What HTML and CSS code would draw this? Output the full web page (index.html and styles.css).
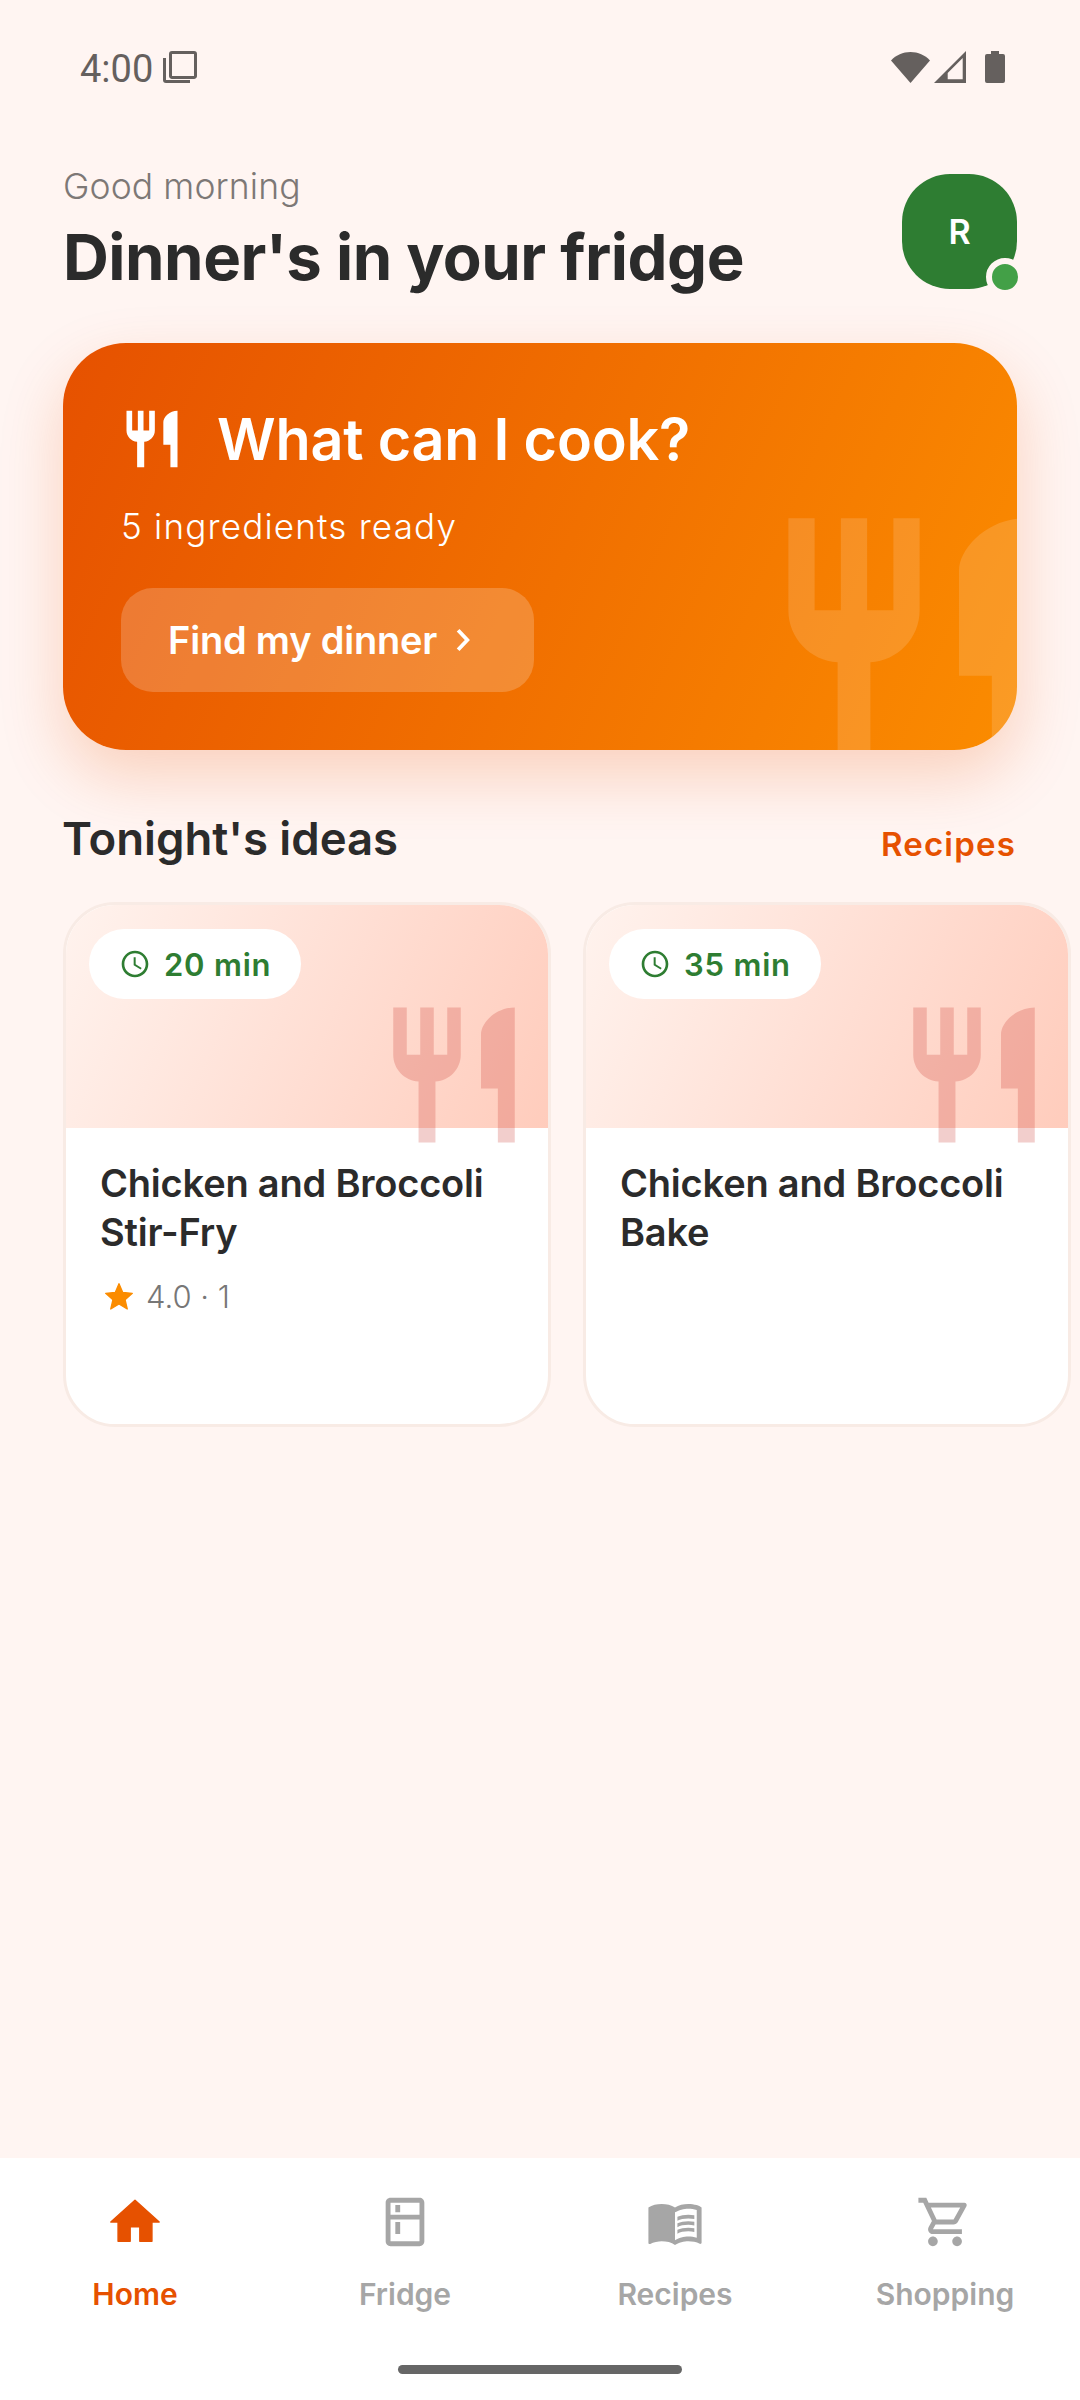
FILE: index.html
```html
<!DOCTYPE html>
<html lang="en">

<head>
    <meta charset="utf-8">
    <meta name="viewport" content="width=device-width, initial-scale=1.0">
    <title>Dinner's in your fridge</title>
    <link rel="stylesheet" href="styles.css">
</head>

<body>
    <svg class="icon-defs" width="0" height="0" aria-hidden="true">
        <symbol id="restaurant" viewBox="0 0 24 24">
            <path d="M11 9H9V2H7v7H5V2H3v7c0 2.12 1.66 3.84 3.75 3.97V22h2.5v-9.03C11.34 12.84 13 11.12 13 9V2h-2v7zm5-3v8h2.5v8H21V2c-2.76 0-5 2.24-5 4z" />
        </symbol>
        <symbol id="schedule" viewBox="0 0 24 24">
            <path d="M11.99 2C6.47 2 2 6.48 2 12s4.47 10 9.99 10C17.52 22 22 17.52 22 12S17.52 2 11.99 2zM12 20c-4.42 0-8-3.58-8-8s3.58-8 8-8 8 3.58 8 8-3.58 8-8 8zm.5-13H11v6l5.25 3.15.75-1.23-4.5-2.67z" />
        </symbol>
    </svg>

    <div class="status-bar">
        <div class="status-left">
            <span class="status-time">4:00</span>
            <svg class="status-copy" viewBox="0 0 34 32">
                <path d="M9 1.5h22a1.5 1.5 0 0 1 1.500 1.500v22a1.500 1.500 0 0 1-1.500 1.500H9A1.500 1.500 0 0 1 7.500 25V3A1.500 1.500 0 0 1 9 1.500z" />
                <path d="M1.500 7v22a1.500 1.500 0 0 0 1.500 1.500h24" />
            </svg>
        </div>
        <div class="status-right">
            <svg class="status-wifi" viewBox="0 0 39 31">
                <path d="M0 8.500C5 3 12 0 19.500 0S34 3 39 8.500L19.500 31z" />
            </svg>
            <svg class="status-signal" viewBox="0 0 32 32">
                <path fill-rule="evenodd" d="M32 0v32H0zM28.700 7 13.700 22v6.300h15z" />
            </svg>
            <svg class="status-battery" viewBox="0 0 20 32">
                <path d="M6 0h8v3h4a2 2 0 0 1 2 2v25a2 2 0 0 1-2 2H2a2 2 0 0 1-2-2V5a2 2 0 0 1 2-2h4z" />
            </svg>
        </div>
    </div>

    <header class="header">
        <div>
            <p class="greeting">Good morning</p>
            <h1 class="page-title">Dinner's in your fridge</h1>
        </div>
        <div class="avatar">
            R
            <span class="avatar-dot"></span>
        </div>
    </header>

    <section class="hero">
        <div class="hero-clip">
            <svg class="hero-mark"><use href="#restaurant" /></svg>
        </div>
        <div class="hero-title-row">
            <svg class="hero-icon"><use href="#restaurant" /></svg>
            <h2 class="hero-title">What can I cook?</h2>
        </div>
        <p class="hero-sub">5 ingredients ready</p>
        <div class="hero-btn">
            Find my dinner
            <svg class="hero-chevron" viewBox="0 0 14 24">
                <path d="M2.500 3 11 12l-8.500 9" />
            </svg>
        </div>
    </section>

    <div class="section-head">
        <h2 class="section-title">Tonight's ideas</h2>
        <span class="section-link">Recipes</span>
    </div>

    <div class="cards">
        <article class="card">
            <div class="card-top">
                <div class="chip">
                    <svg class="chip-icon"><use href="#schedule" /></svg>
                    20 min
                </div>
            </div>
            <svg class="card-mark"><use href="#restaurant" /></svg>
            <div class="card-body">
                <h3 class="card-title">Chicken and Broccoli Stir-Fry</h3>
                <div class="rating">
                    <svg class="star" viewBox="0 0 24 24">
                        <path d="M12 17.270 18.180 21l-1.640-7.030L22 9.240l-7.190-.610L12 2 9.190 8.630 2 9.240l5.460 4.730L5.820 21z" />
                    </svg>
                    4.0 · 1
                </div>
            </div>
        </article>
        <article class="card">
            <div class="card-top">
                <div class="chip">
                    <svg class="chip-icon"><use href="#schedule" /></svg>
                    35 min
                </div>
            </div>
            <svg class="card-mark"><use href="#restaurant" /></svg>
            <div class="card-body">
                <h3 class="card-title">Chicken and Broccoli Bake</h3>
            </div>
        </article>
    </div>

    <nav class="bottom-nav">
        <div class="nav-items">
            <div class="nav-item active">
                <svg viewBox="0 0 24 24">
                    <path stroke="currentColor" stroke-width="0.6" stroke-linejoin="round" d="M10 20v-6h4v6h5v-8h3L12 3 2 12h3v8z" />
                </svg>
                <span>Home</span>
            </div>
            <div class="nav-item">
                <svg viewBox="0 0 24 24">
                    <path d="M18 2.010 6 2c-1.100 0-2 .89-2 2v16c0 1.100.9 2 2 2h12c1.100 0 2-.9 2-2V4c0-1.110-.9-1.990-2-1.990zM18 20H6v-9.020h12V20zm0-11H6V4h12v5zM8 5h2v3H8zm0 7h2v5H8z" />
                </svg>
                <span>Fridge</span>
            </div>
            <div class="nav-item">
                <svg viewBox="0 0 24 24">
                    <path d="M21 5c-1.110-.35-2.330-.5-3.500-.5-1.950 0-4.050.4-5.500 1.500-1.450-1.100-3.550-1.500-5.500-1.500S2.450 4.900 1 6v14.650c0 .25.25.5.5.5.1 0 .15-.05.25-.05C3.100 20.450 5.050 20 6.500 20c1.950 0 4.050.4 5.500 1.500 1.350-.85 3.800-1.500 5.500-1.500 1.650 0 3.350.3 4.750 1.050.1.05.15.05.25.05.25 0 .5-.25.5-.5V6c-.6-.45-1.250-.75-2-1zm0 13.500c-1.100-.35-2.300-.5-3.500-.5-1.700 0-4.150.65-5.500 1.500V8c1.350-.85 3.800-1.500 5.500-1.500 1.200 0 2.400.15 3.500.5v11.500z" />
                    <path d="M17.500 10.500c.88 0 1.730.09 2.500.26V9.240c-.79-.15-1.640-.24-2.500-.24-1.700 0-3.240.29-4.500.83v1.660c1.130-.64 2.700-.99 4.500-.99zM13 12.490v1.660c1.130-.64 2.700-.99 4.500-.99.88 0 1.730.09 2.500.26V11.900c-.79-.15-1.640-.24-2.500-.24-1.700 0-3.240.3-4.500.83zM17.500 14.330c-1.700 0-3.240.29-4.500.83v1.660c1.130-.64 2.700-.99 4.500-.99.88 0 1.730.09 2.500.26v-1.520c-.79-.16-1.640-.24-2.500-.24z" />
                </svg>
                <span>Recipes</span>
            </div>
            <div class="nav-item">
                <svg viewBox="0 0 24 24">
                    <path d="M15.550 13c.75 0 1.410-.41 1.750-1.030l3.580-6.490c.37-.66-.11-1.480-.87-1.480H5.210l-.94-2H1v2h2l3.600 7.590-1.350 2.440C4.520 15.370 5.480 17 7 17h12v-2H7l1.100-2h7.450zM6.160 6h12.150l-2.760 5H8.530L6.160 6zM7 18c-1.100 0-1.990.9-1.990 2S5.900 22 7 22s2-.9 2-2-.9-2-2-2zm10 0c-1.100 0-1.990.9-1.990 2s.89 2 1.990 2 2-.9 2-2-.9-2-2-2z" />
                </svg>
                <span>Shopping</span>
            </div>
        </div>
        <div class="home-bar"></div>
    </nav>
</body>

</html>
```

FILE: styles.css
```css
:root {
    --bg: #FFF5F2;
    --ink: #2B2B2B;
    --orange: #E65100;
    --orange-light: #FB8C00;
    --green: #2E7D32;
    --grey: #A6A6A6;
    --status: #65605E;
    --sans: "Inter", "Liberation Sans", sans-serif;
}

*,
::before,
::after {
    box-sizing: border-box;
    padding: 0;
    margin: 0;
}

body {
    width: 1080px;
    height: 2400px;
    overflow: hidden;
    display: flex;
    flex-direction: column;
    background: var(--bg);
    color: var(--ink);
    font-family: var(--sans);
}

.icon-defs {
    position: absolute;
}

/* status bar */
.status-bar {
    height: 134px;
    flex: none;
    display: flex;
    justify-content: space-between;
    align-items: center;
    padding: 0 75px 0 80px;
    color: var(--status);
}

.status-left,
.status-right {
    display: flex;
    align-items: center;
}

.status-time {
    padding-top: 3px;
    font-family: "Roboto", sans-serif;
    font-size: 38px;
    line-height: 44px;
}

.status-copy {
    width: 34px;
    height: 32px;
    margin-left: 10px;
    fill: none;
    stroke: var(--status);
    stroke-width: 3;
}

.status-wifi {
    width: 39px;
    height: 31px;
    fill: var(--status);
}

.status-signal {
    width: 32px;
    height: 32px;
    margin-left: 4px;
    fill: var(--status);
}

.status-battery {
    width: 20px;
    height: 32px;
    margin-left: 19px;
    fill: var(--status);
}

/* header */
.header {
    height: 130px;
    flex: none;
    margin-top: 33px;
    padding: 0 63px;
    display: flex;
    justify-content: space-between;
}

.greeting {
    font-size: 35.5px;
    line-height: 40px;
    font-weight: 300;
    letter-spacing: 0.1px;
    color: #7D7876;
}

.page-title {
    margin-top: 10px;
    font-size: 63.5px;
    line-height: 80px;
    font-weight: 700;
    letter-spacing: -0.5px;
}

.avatar {
    position: relative;
    width: 115px;
    height: 115px;
    margin-top: 7px;
    border-radius: 48px;
    background: var(--green);
    color: #fff;
    font-size: 34px;
    font-weight: 600;
    display: flex;
    align-items: center;
    justify-content: center;
}

.avatar-dot {
    position: absolute;
    right: -7px;
    bottom: -7px;
    width: 38px;
    height: 38px;
    border-radius: 50%;
    border: 6px solid var(--bg);
    background: #43A047;
}

/* hero card */
.hero {
    position: relative;
    height: 407px;
    flex: none;
    margin: 46px 63px 0;
    padding: 63px 58px 0;
    border-radius: 63px;
    background: linear-gradient(113deg, var(--orange), var(--orange-light));
    box-shadow: 0 26px 63px rgba(230, 81, 0, 0.22);
    color: #fff;
}

.hero-clip {
    position: absolute;
    inset: 0;
    overflow: hidden;
    border-radius: 63px;
}

.hero-mark {
    position: absolute;
    left: 686px;
    top: 149px;
    width: 315px;
    height: 315px;
    fill: rgba(255, 255, 255, 0.14);
}

.hero-title-row {
    position: relative;
    display: flex;
    align-items: center;
    height: 66px;
}

.hero-icon {
    width: 68px;
    height: 68px;
    margin-left: -3px;
    fill: #fff;
}

.hero-title {
    margin-left: 31px;
    font-size: 57.5px;
    line-height: 66px;
    font-weight: 600;
    letter-spacing: -0.2px;
}

.hero-sub {
    position: relative;
    margin-top: 32px;
    font-size: 35px;
    line-height: 44px;
    font-weight: 300;
    letter-spacing: 1.2px;
}

.hero-btn {
    position: relative;
    width: 413px;
    height: 104px;
    margin-top: 40px;
    padding-left: 47px;
    border-radius: 32px;
    background: rgba(255, 255, 255, 0.2);
    display: flex;
    align-items: center;
    font-size: 38px;
    font-weight: 600;
    letter-spacing: -0.2px;
}

.hero-chevron {
    width: 16px;
    height: 26px;
    margin-left: 18px;
    fill: none;
    stroke: #fff;
    stroke-width: 3.500;
}

/* section head */
.section-head {
    flex: none;
    margin-top: 61px;
    padding: 0 64px 0 62px;
    height: 56px;
    display: flex;
    justify-content: space-between;
    align-items: baseline;
}

.section-title {
    font-size: 45.5px;
    line-height: 56px;
    font-weight: 600;
}

.section-link {
    position: relative;
    top: 1px;
    font-size: 33px;
    font-weight: 600;
    letter-spacing: 1.2px;
    color: var(--orange);
}

/* recipe cards */
.cards {
    flex: none;
    margin-top: 35px;
    padding-left: 63px;
    display: flex;
    gap: 32px;
}

.card {
    position: relative;
    flex: none;
    width: 488px;
    height: 525px;
    border: 3px solid #F8EBE5;
    border-radius: 52px;
    background: #fff;
    overflow: hidden;
}

.card-top {
    height: 223px;
    padding: 24px 0 0 23px;
    background: linear-gradient(115deg, #FFF3EE, #FFCCBC);
}

.chip {
    width: 212px;
    height: 70px;
    padding-left: 30px;
    border-radius: 35px;
    background: #fff;
    color: var(--green);
    font-size: 31px;
    font-weight: 600;
    letter-spacing: 0.8px;
    display: flex;
    align-items: center;
}

.chip-icon {
    width: 32px;
    height: 32px;
    margin-right: 13px;
    fill: var(--green);
}

.card-mark {
    position: absolute;
    left: 307px;
    top: 89px;
    width: 162px;
    height: 162px;
    fill: rgba(205, 60, 50, 0.25);
}

.card-body {
    padding: 31px 34px 0;
}

.card-title {
    font-size: 38px;
    line-height: 49px;
    font-weight: 600;
    letter-spacing: -0.2px;
}

.rating {
    margin-top: 20px;
    padding-left: 3px;
    display: flex;
    align-items: center;
    font-size: 31px;
    line-height: 40px;
    font-weight: 300;
    color: #777;
}

.star {
    width: 32px;
    height: 32px;
    margin-right: 11px;
    fill: var(--orange-light);
    stroke: var(--orange-light);
    stroke-width: 1;
    stroke-linejoin: round;
}

/* bottom nav */
.bottom-nav {
    margin-top: auto;
    height: 242px;
    flex: none;
    background: #fff;
    display: flex;
    flex-direction: column;
}

.nav-items {
    display: flex;
    padding-top: 35px;
}

.nav-item {
    width: 270px;
    display: flex;
    flex-direction: column;
    align-items: center;
    color: var(--grey);
    font-size: 30px;
    font-weight: 600;
    line-height: 40px;
}

.nav-item svg {
    width: 58px;
    height: 58px;
    margin-bottom: 23px;
    fill: currentColor;
}

.nav-item.active {
    color: var(--orange);
}

.home-bar {
    width: 284px;
    height: 9px;
    margin: 51px auto 0;
    border-radius: 5px;
    background: #666;
}
```
